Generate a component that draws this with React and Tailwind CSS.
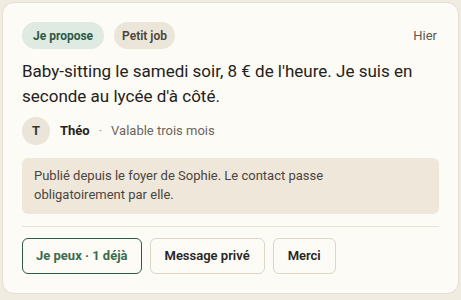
export default function App() {
  return (
    <div className="w-[461px] h-[300px] bg-[#f1ece1] p-[2px] pb-[6px]" style={{ fontFamily: "Roboto, 'Noto Sans', sans-serif" }}>
      <div className="h-full rounded-[12px] border border-[#e4ddd0] bg-[#fdfbf5] px-[19px] pt-[19px]">
        <div className="flex items-center">
          <span className="rounded-full bg-[#dfeae2] px-[11px] h-[27px] flex items-center text-[12px] font-bold text-[#2d5a42]">Je propose</span>
          <span className="ml-[10px] rounded-full bg-[#ece6da] px-[8px] h-[27px] flex items-center text-[12px] font-semibold text-[#4a4338]">Petit job</span>
          <span className="ml-auto mr-[2px] text-[13px] text-[#5c5850]">Hier</span>
        </div>
        <p className="mt-[10px] text-[17px] leading-[25px] text-[#232220]">
          Baby-sitting le samedi soir, 8 € de l'heure. Je suis en seconde au lycée d'à côté.
        </p>
        <div className="mt-[8px] flex items-center">
          <span className="w-[28px] h-[28px] rounded-full bg-[#ebe5d9] flex items-center justify-center text-[13px] font-bold text-[#3a352e]">T</span>
          <span className="ml-[10px] text-[13px] font-bold text-[#232220]">Théo</span>
          <span className="ml-[9px] text-[13px] text-[#9a948a]">·</span>
          <span className="ml-[9px] text-[13px] text-[#6b665e]">Valable trois mois</span>
        </div>
        <div className="mt-[13px] rounded-[6px] bg-[#efe7da] px-[12px] pt-[8px] pb-[10px] text-[13px] leading-[19px] text-[#4a4540]">
          Publié depuis le foyer de Sophie. Le contact passe
          <br />
          obligatoirement par elle.
        </div>
        <div className="mt-[12px] border-t border-[#e8e2d6]" />
        <div className="mt-[11px] flex gap-[8px]">
          <button className="h-[36px] px-[13px] rounded-[6px] border border-[#2f5b45] text-[13px] font-bold text-[#3a6b4e]">Je peux · 1 déjà</button>
          <button className="h-[36px] px-[14px] rounded-[6px] border border-[#ddd5c8] text-[13px] font-semibold text-[#26241f]">Message privé</button>
          <button className="h-[36px] px-[14px] rounded-[6px] border border-[#ddd5c8] text-[13px] font-semibold text-[#26241f]">Merci</button>
        </div>
      </div>
    </div>
  );
}
